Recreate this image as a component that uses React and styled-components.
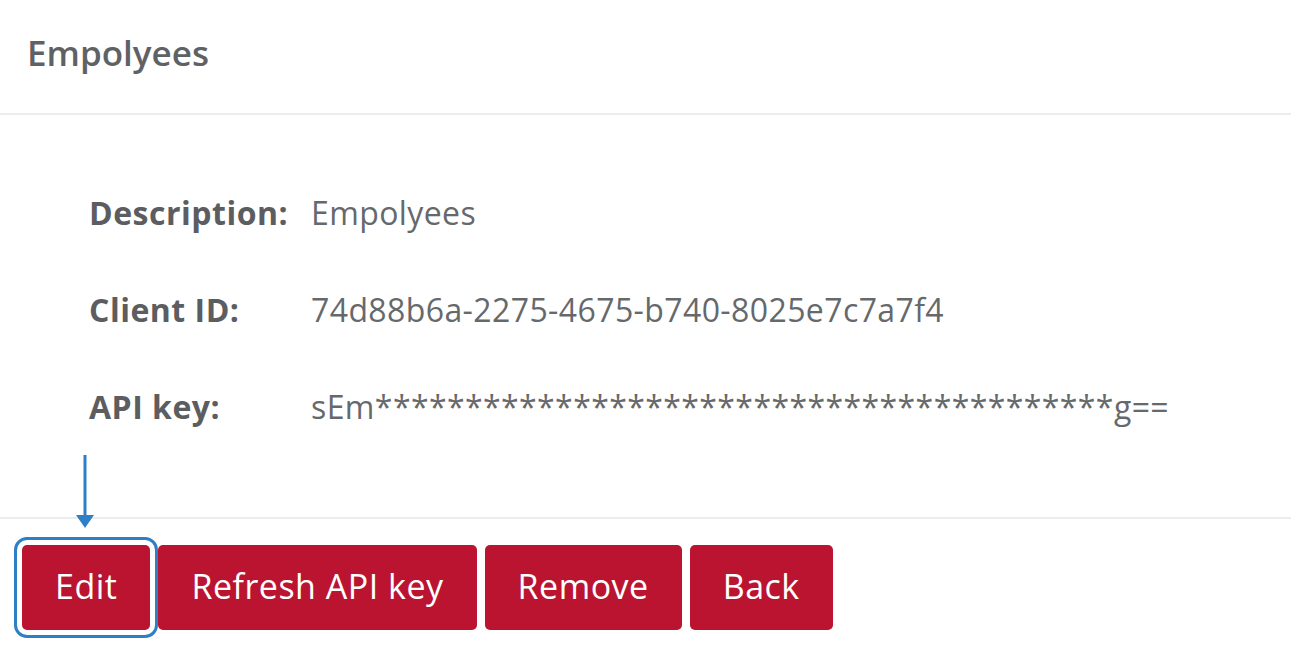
import React from "react";
import styled, { createGlobalStyle } from "styled-components";

const GlobalStyle = createGlobalStyle`
  html, body {
    margin: 0;
    padding: 0;
    background: #ffffff;
    font-family: "Open Sans", "Liberation Sans", sans-serif;
  }
`;

const details = [
  { label: "Description:", value: "Empolyees" },
  { label: "Client ID:", value: "74d88b6a-2275-4675-b740-8025e7c7a7f4" },
  { label: "API key:", value: "sEm" + "*".repeat(41) + "g==" },
];

const actions = ["Edit", "Refresh API key", "Remove", "Back"];

function App() {
  return (
    <>
      <GlobalStyle />
      <Page>
        <Header>
          <Title>Empolyees</Title>
        </Header>
        <Details>
          {details.map((d) => (
            <Row key={d.label}>
              <Label>{d.label}</Label>
              <Value>{d.value}</Value>
            </Row>
          ))}
        </Details>
        <Footer>
          {actions.map((a, i) =>
            i === 0 ? (
              <Marked key={a}>
                <Arrow width="22" height="74" viewBox="0 0 22 74">
                  <line x1="11" y1="0" x2="11" y2="62" stroke="#2f7fc6" strokeWidth="3" />
                  <polygon points="2,60 20,60 11,73" fill="#2f7fc6" />
                </Arrow>
                <ActionButton $marked>{a}</ActionButton>
              </Marked>
            ) : (
              <ActionButton key={a}>{a}</ActionButton>
            )
          )}
        </Footer>
      </Page>
    </>
  );
}

export default App;

const Page = styled.div`
  width: 100%;
  min-height: 654px;
  background: #ffffff;
`;

const Header = styled.div`
  height: 115px;
  padding: 0 27px;
  display: flex;
  align-items: center;
  border-bottom: 2px solid #ececec;
  box-sizing: border-box;
`;

const Title = styled.h1`
  margin: 0;
  font-size: 35px;
  font-weight: 600;
  color: #5f6265;
  line-height: 1;
  padding-bottom: 8px;
`;

const Details = styled.div`
  padding: 49px 89px 62px 89px;
  border-bottom: 2px solid #ececec;
`;

const Row = styled.div`
  display: flex;
  height: 97px;
  line-height: 97px;
  font-size: 32px;
  white-space: nowrap;
`;

const Label = styled.span`
  width: 222px;
  flex: none;
  font-weight: 700;
  letter-spacing: 0.5px;
  color: #5b5d60;
`;

const Value = styled.span`
  font-weight: 400;
  letter-spacing: 0.4px;
  color: #66696c;
`;

const Footer = styled.div`
  display: flex;
  gap: 8px;
  padding: 26px 22px;
`;

const Marked = styled.div`
  position: relative;
  display: flex;
`;

const Arrow = styled.svg`
  position: absolute;
  left: 52px;
  top: -90px;
`;

const ActionButton = styled.button`
  height: 85px;
  padding: 0 33px 3px;
  border: none;
  border-radius: 5px;
  background: #ba1431;
  color: #ffffff;
  font-family: "Open Sans", "Liberation Sans", sans-serif;
  font-size: 34px;
  font-weight: 400;
  letter-spacing: 0.5px;
  cursor: pointer;
  outline: ${(p) => (p.$marked ? "3px solid #2f7fc6" : "none")};
  outline-offset: 5px;
`;
